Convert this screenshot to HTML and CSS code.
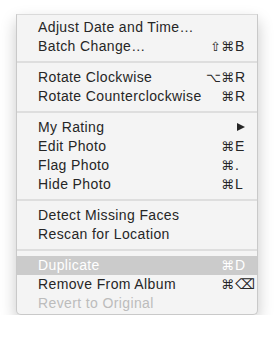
FILE: index.html
```html
<!DOCTYPE html>
<html lang="en">
<head>
    <meta charset="UTF-8">
    <title>Photo menu</title>
    <link rel="stylesheet" href="styles.css">
</head>
<body>
    <div class="menu">
        <div class="item"><span class="label">Adjust Date and Time…</span></div>
        <div class="item"><span class="label">Batch Change…</span><span class="mods">⇧⌘</span><span class="key">B</span></div>
        <div class="sep"></div>
        <div class="item"><span class="label">Rotate Clockwise</span><span class="mods">⌥⌘</span><span class="key">R</span></div>
        <div class="item"><span class="label">Rotate Counterclockwise</span><span class="mods">⌘</span><span class="key">R</span></div>
        <div class="sep"></div>
        <div class="item"><span class="label">My Rating</span><span class="arrow"></span></div>
        <div class="item"><span class="label">Edit Photo</span><span class="mods">⌘</span><span class="key">E</span></div>
        <div class="item"><span class="label">Flag Photo</span><span class="mods">⌘</span><span class="key">.</span></div>
        <div class="item"><span class="label">Hide Photo</span><span class="mods">⌘</span><span class="key">L</span></div>
        <div class="sep"></div>
        <div class="item"><span class="label">Detect Missing Faces</span></div>
        <div class="item"><span class="label">Rescan for Location</span></div>
        <div class="sep"></div>
        <div class="item active"><span class="label">Duplicate</span><span class="mods">⌘</span><span class="key">D</span></div>
        <div class="item"><span class="label">Remove From Album</span><span class="mods">⌘</span><span class="key">⌫</span></div>
        <div class="item disabled"><span class="label">Revert to Original</span></div>
    </div>
</body>
</html>
```

FILE: styles.css
```css
* {
    margin: 0;
    padding: 0;
    box-sizing: border-box;
}

body {
    background: #fff;
    font-family: 'Liberation Sans', 'DejaVu Sans', Arial, sans-serif;
    padding: 14px 17px 0 16px;
}

.menu {
    width: 242px;
    height: 301px;
    padding: 3px 0;
    background: #f4f4f4;
    border: 1px solid #c9c9c9;
    border-top-color: #dadada;
    border-radius: 0 0 5px 5px;
    box-shadow: 0 7px 16px rgba(0, 0, 0, 0.22);
}

.item {
    display: flex;
    align-items: center;
    height: 19px;
    padding: 0 11px 1px 21px;
    font-size: 14px;
    letter-spacing: 0.38px;
    color: #262626;
}

.label {
    flex: 1;
    white-space: nowrap;
}

.mods {
    font-family: 'DejaVu Sans', sans-serif;
    font-size: 13px;
    letter-spacing: 0;
    text-align: right;
}

.key {
    width: 12px;
    padding-left: 1px;
}

/* submenu triangle */
.arrow {
    width: 0;
    height: 0;
    margin-right: 1px;
    border-top: 4.5px solid transparent;
    border-bottom: 4.5px solid transparent;
    border-left: 8px solid #262626;
}

.sep {
    height: 12px;
    display: flex;
    align-items: center;
}

.sep::before {
    content: "";
    flex: 1;
    height: 2px;
    margin-top: -1px;
    background: #dedede;
}

.active {
    background: #cbcbcb;
    color: #fff;
}

.disabled {
    color: #bcbcbc;
}
```
